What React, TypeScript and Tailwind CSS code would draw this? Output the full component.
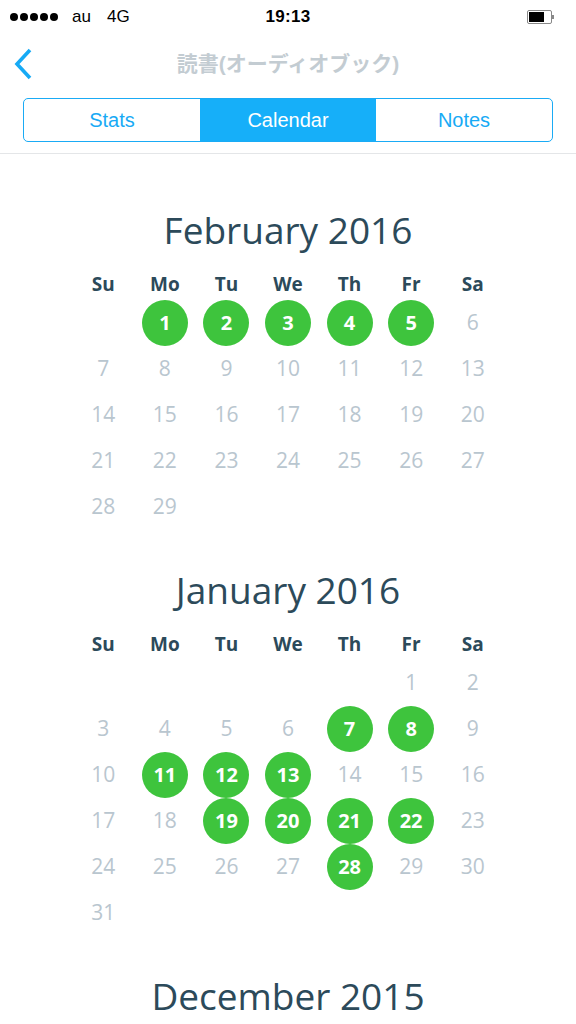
import React from "react";

type Month = {
  title: string;
  startDay: number;
  days: number;
  done: number[];
  showGrid: boolean;
};

const months: Month[] = [
  { title: "February 2016", startDay: 1, days: 29, done: [1, 2, 3, 4, 5], showGrid: true },
  { title: "January 2016", startDay: 5, days: 31, done: [7, 8, 11, 12, 13, 19, 20, 21, 22, 28], showGrid: true },
  // only the heading of December is on screen
  { title: "December 2015", startDay: 2, days: 31, done: [], showGrid: false },
];

const weekdays = ["Su", "Mo", "Tu", "We", "Th", "Fr", "Sa"];

const StatusBar = () => (
  <div className="relative flex h-[34px] items-center px-[10px] font-['Liberation_Sans',sans-serif] text-[17px] text-black">
    <div className="flex items-center gap-[2px]">
      {[0, 1, 2, 3, 4].map((i) => (
        <span key={i} className="h-[8px] w-[8px] rounded-full bg-black" />
      ))}
    </div>
    <span className="ml-[14px]">au</span>
    <span className="ml-[16px]">4G</span>
    <span className="absolute left-1/2 -translate-x-1/2 text-[17px] font-bold tracking-[0.3px]">19:13</span>
    <div className="ml-auto mr-[12px] flex items-center">
      <div className="flex h-[14px] w-[25px] items-center rounded-[2px] border border-[#888] p-[1px]">
        <div className="h-full w-[15px] bg-black" />
      </div>
      <div className="h-[4px] w-[2px] bg-[#888]" />
    </div>
  </div>
);

const NavBar = () => (
  <div className="border-b border-[#e4e6e8] pb-[11px]">
    <div className="relative flex h-[60px] items-center">
      <svg className="ml-[12px]" width="22" height="34" viewBox="0 0 22 34">
        <path d="M18 3 L5 17 L18 31" fill="none" stroke="#16aaf5" strokeWidth="3.6" />
      </svg>
      <span className="absolute left-1/2 -translate-x-1/2 font-['Liberation_Sans','Noto_Sans_CJK_JP',sans-serif] text-[21px] font-bold text-[#c3ccd2]">
        読書(オーディオブック)
      </span>
    </div>
    <div className="mx-[23px] mt-[4px] grid h-[44px] grid-cols-3 overflow-hidden rounded-[5px] border border-[#1aabf5] font-['Liberation_Sans',sans-serif] text-[20px]">
      <div className="flex items-center justify-center text-[#18aaf5]">Stats</div>
      <div className="flex items-center justify-center bg-[#16aff9] text-white">Calendar</div>
      <div className="flex items-center justify-center text-[#18aaf5]">Notes</div>
    </div>
  </div>
);

const MonthBlock = ({ month }: { month: Month }) => {
  const cells: (number | null)[] = [];
  for (let i = 0; i < month.startDay; i++) cells.push(null);
  for (let d = 1; d <= month.days; d++) cells.push(d);

  return (
    <div className="mb-[36px]">
      <h2 className="flex h-[48px] items-center justify-center text-[37px] font-normal text-[#2c4a5a]">
        {month.title}
      </h2>
      {month.showGrid && (
        <div className="mx-auto mt-[15px] grid w-[431px] grid-cols-7">
          {weekdays.map((w) => (
            <div key={w} className="flex h-[31px] items-center justify-center text-[19px] font-bold text-[#2c4a5a]">
              {w}
            </div>
          ))}
          {cells.map((d, i) => (
            <div key={i} className="flex h-[46px] items-center justify-center">
              {d !== null &&
                (month.done.includes(d) ? (
                  <span className="flex h-[46px] w-[46px] items-center justify-center rounded-full bg-[#3ec43d] text-[20px] font-bold text-white">
                    {d}
                  </span>
                ) : (
                  <span className="text-[21px] text-[#b9c6cf]">{d}</span>
                ))}
            </div>
          ))}
        </div>
      )}
    </div>
  );
};

const App = () => {
  return (
    <div className="h-[1024px] w-[576px] overflow-hidden bg-white">
      <StatusBar />
      <NavBar />
      <div className="pt-[52px] font-['Open_Sans',sans-serif]">
        {months.map((m) => (
          <MonthBlock key={m.title} month={m} />
        ))}
      </div>
    </div>
  );
};

export default App;
